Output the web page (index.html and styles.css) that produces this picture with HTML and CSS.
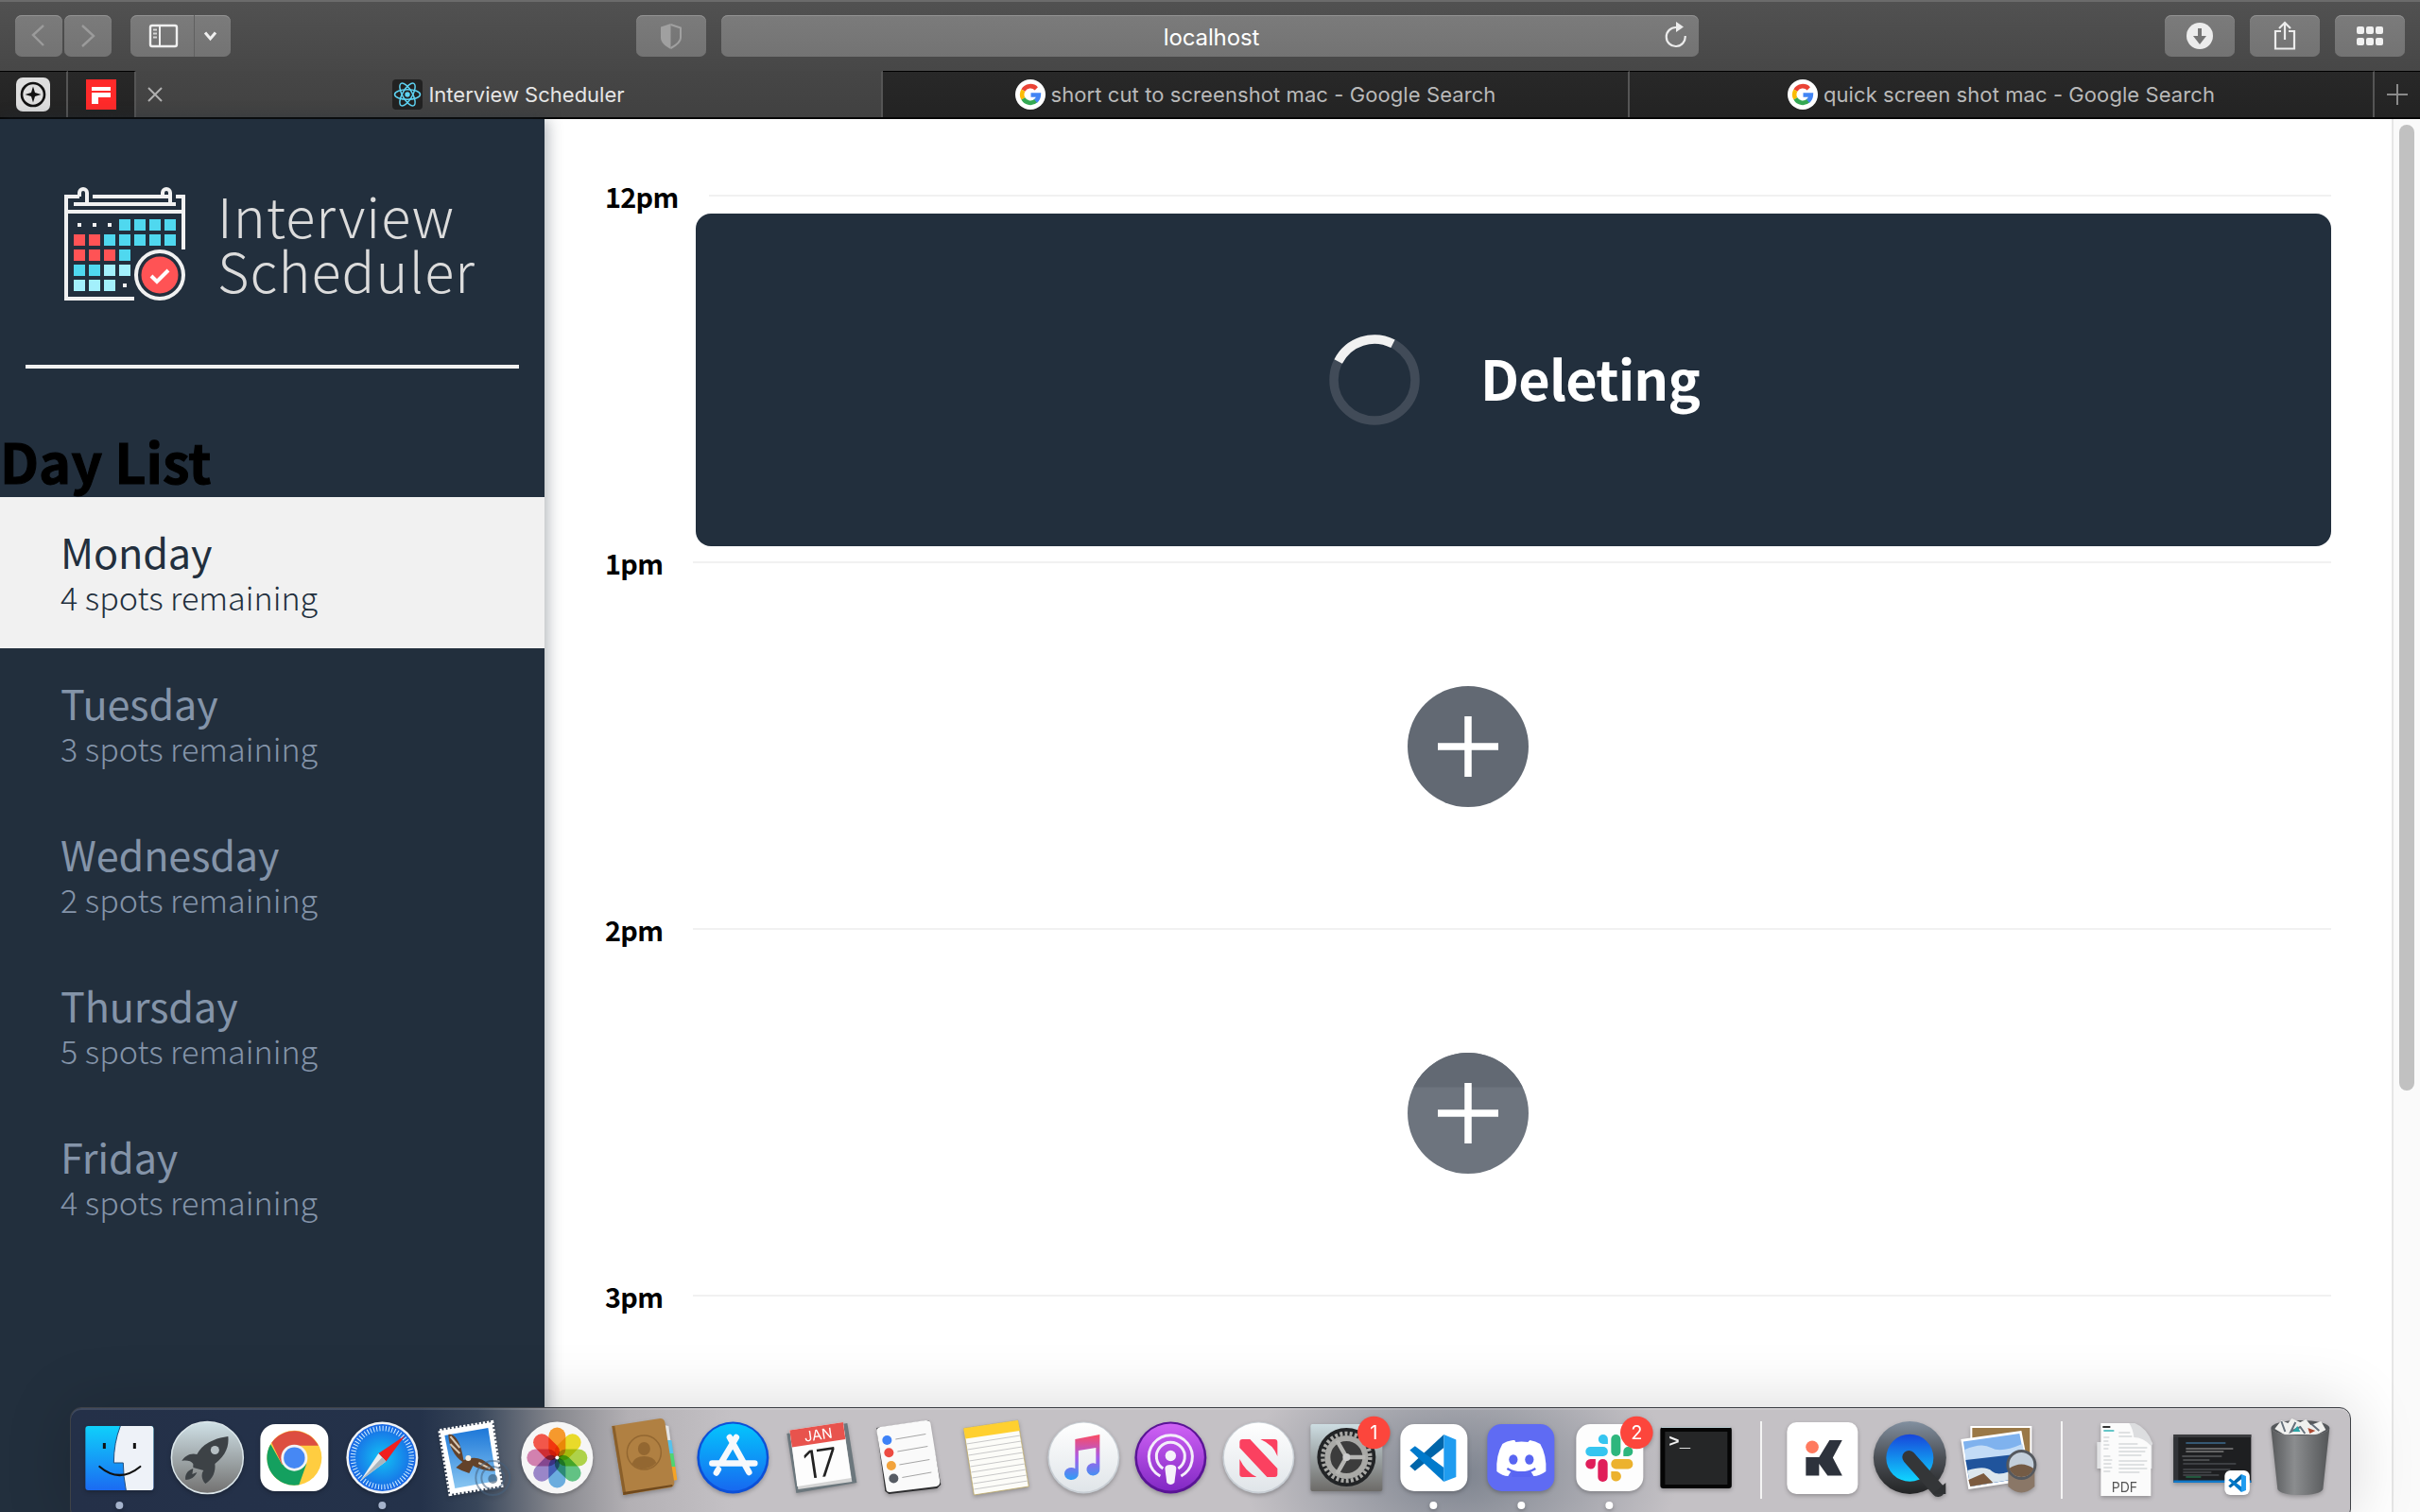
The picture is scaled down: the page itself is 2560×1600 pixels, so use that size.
FILE: index.html
```html
<!DOCTYPE html>
<html lang="en">
<head>
<meta charset="utf-8">
<title>Interview Scheduler</title>
<link rel="stylesheet" href="styles.css">
</head>
<body>
<div class="screen">
  <header class="toolbar">
    <div class="nav-pair">
      <span class="tool tool-nav"><svg width="50" height="44"><path d="M31 12 20 22 31 33" transform="translate(-1 -1)" fill="none" stroke="#9b9b9b" stroke-width="2.4"/></svg></span>
      <span class="tool tool-nav"><svg width="50" height="44"><path d="M19 11 31 22 19 33" fill="none" stroke="#9b9b9b" stroke-width="2.4"/></svg></span>
    </div>
    <div class="tool tool-sidebar">
      <svg class="side-main" width="68" height="44"><rect x="21" y="11" width="28" height="22" rx="2" fill="none" stroke="#f0f0f0" stroke-width="2.4"/><path d="M31 11v22" stroke="#f0f0f0" stroke-width="2"/><path d="M24 15.500h4M24 19.500h4M24 23.500h4" stroke="#d5d5d5" stroke-width="2"/></svg>
      <svg width="37" height="44"><path d="M11 18.500 16.500 25 22 18.500" fill="none" stroke="#f0f0f0" stroke-width="3"/></svg>
    </div>
    <div class="tool tool-shield"><svg width="74" height="44"><path d="M36.500 9 26 12.500V24c0 5 5 9 10.500 12z" fill="#a0a0a0"/><path d="M36.500 10 47 13.500V24c0 4-5 8-10.500 11" fill="none" stroke="#a0a0a0" stroke-width="2"/></svg></div>
    <div class="tool address"><span>localhost</span><svg class="reload" width="30" height="34" viewBox="0 0 30 34"><path d="M16 9a10 10 0 1 0 9.700 9" fill="none" stroke="#ececec" stroke-width="2.200"/><path d="M16 3v11l8-5.500z" fill="#ececec"/></svg></div>
    <div class="tool-group">
      <span class="tool tool-action"><svg width="74" height="44"><circle cx="37" cy="22" r="14" fill="#ececec"/><path d="M37 14v9" stroke="#757575" stroke-width="4"/><path d="M30 22h14l-7 9z" fill="#757575"/></svg></span>
      <span class="tool tool-action"><svg width="74" height="44"><path d="M33 17h-6v18.500h20V17h-6M37 26V8M31 14l6-6 6 6" fill="none" stroke="#ececec" stroke-width="2.200"/></svg></span>
      <span class="tool tool-action"><svg width="74" height="44" fill="#f0f0f0"><rect x="23" y="12" width="8" height="8" rx="2"/><rect x="33" y="12" width="8" height="8" rx="2"/><rect x="43" y="12" width="8" height="8" rx="2"/><rect x="23" y="24" width="8" height="8" rx="2"/><rect x="33" y="24" width="8" height="8" rx="2"/><rect x="43" y="24" width="8" height="8" rx="2"/></svg></span>
    </div>
  </header>

  <nav class="tabs">
    <div class="tab tab-pin"><svg width="36" height="36"><rect width="36" height="36" rx="7" fill="#dedede"/><circle cx="18" cy="18" r="12" fill="none" stroke="#111" stroke-width="2.600"/><path d="M18 9.500 20 16 26.500 18 20 20 18 26.500 16 20 9.500 18 16 16z" fill="#111"/></svg></div>
    <div class="tab tab-pin"><svg width="32" height="32"><path d="M0 0h32v32H0z" fill="#ff2a2a"/><path d="M6 8h20v4H6zM6 14h20v5H13v7H6z" fill="#fff"/></svg></div>
    <div class="tab tab-active">
      <svg class="close" width="18" height="18"><path d="M2 2 16 16M16 2 2 16" stroke="#b0b0b0" stroke-width="2"/></svg>
      <svg width="32" height="32" viewBox="-16 -16 32 32"><rect x="-16" y="-16" width="32" height="32" rx="4" fill="#222"/><g fill="none" stroke="#5ed3f3" stroke-width="1.500"><ellipse rx="13.500" ry="5.200"/><ellipse rx="13.500" ry="5.200" transform="rotate(60)"/><ellipse rx="13.500" ry="5.200" transform="rotate(120)"/></g><circle r="2.700" fill="#5ed3f3"/></svg>
      <span>Interview Scheduler</span>
    </div>
    <div class="tab tab-search"><svg class="g" width="32" height="32"><use href="#google"/></svg><span>short cut to screenshot mac - Google Search</span></div>
    <div class="tab tab-search tab-last"><svg class="g" width="32" height="32"><use href="#google"/></svg><span>quick screen shot mac - Google Search</span></div>
    <div class="tab tab-new"><svg width="24" height="24"><path d="M12 1v22M1 12h22" stroke="#8a8a8a" stroke-width="2"/></svg></div>
  </nav>

  <div class="page">
    <aside class="sidebar">
      <svg class="logo" width="576" height="260" viewBox="0 126 576 260">
        <g fill="none" stroke="#f1f1f1" stroke-width="4">
          <path d="M84 208H70V316H142M186 208H194V264M68 224H196M98 208H182M78 216H186"/>
          <path d="M84 208v-4a4 4 0 0 1 8 0V216M172 208v-4a4 4 0 0 1 8 0V216"/>
          <circle cx="169" cy="291" r="25"/>
        </g>
        <g fill="#4fd8ef"><path d="M126 232h12v12h-12zM142 232h12v12h-12zM158 232h12v12h-12zM174 232h12v12h-12zM110 248h12v12h-12zM126 248h12v12h-12zM142 248h12v12h-12zM158 248h12v12h-12zM174 248h12v12h-12zM126 264h12v12h-12zM78 280h12v12H78zM94 280h12v12H94z"/></g>
        <path fill="#ff5355" d="M78 248h12v12H78zM94 248h12v12H94zM78 264h12v12H78zM94 264h12v12H94zM110 264h12v12h-12z"/>
        <path fill="#a3f0fc" d="M110 280h12v12h-12zM126 280h12v12h-12zM78 296h12v12H78zM94 296h12v12H94zM110 296h12v12h-12z"/>
        <path fill="#f1f1f1" d="M82 236h4v4h-4zM98 236h4v4h-4zM114 236h4v4h-4zM130 300h4v4h-4z"/>
        <circle cx="169" cy="291" r="19.500" fill="#ff5355"/>
        <path d="M160 292l6 6 12-12" fill="none" stroke="#fff" stroke-width="4"/>
        <text class="logo-text" x="230" y="252" textLength="250">Interview</text>
        <text class="logo-text" x="230" y="310" textLength="272">Scheduler</text>
      </svg>
      <hr class="rule">
      <h1 class="day-title">Day List</h1>
      <ul class="days">
        <li class="day day-on"><span class="day-name">Monday</span><span class="day-spots">4 spots remaining</span></li>
        <li class="day"><span class="day-name">Tuesday</span><span class="day-spots">3 spots remaining</span></li>
        <li class="day"><span class="day-name">Wednesday</span><span class="day-spots">2 spots remaining</span></li>
        <li class="day"><span class="day-name">Thursday</span><span class="day-spots">5 spots remaining</span></li>
        <li class="day"><span class="day-name">Friday</span><span class="day-spots">4 spots remaining</span></li>
      </ul>
    </aside>

    <main class="schedule">
      <section class="slot">
        <div class="hour"><h2>12pm</h2><i></i></div>
        <div class="status">
          <svg width="100" height="100" viewBox="-50 -50 100 100"><circle r="43" fill="none" stroke="#414b58" stroke-width="9.500"/><path d="M-38.300-19.500A43 43 0 0 1 19.500-38.300" fill="none" stroke="#f1f1f1" stroke-width="9.500"/></svg>
          <span>Deleting</span>
        </div>
      </section>
      <section class="slot">
        <div class="hour"><h2>1pm</h2><i></i></div>
        <div class="add"><svg width="128" height="128"><circle cx="64" cy="64" r="64" fill="#626973"/><path d="M64 32v64M32 64h64" stroke="#fff" stroke-width="7.500"/></svg></div>
      </section>
      <section class="slot">
        <div class="hour"><h2>2pm</h2><i></i></div>
        <div class="add"><svg width="128" height="128"><circle cx="64" cy="64" r="64" fill="#6d747e"/><path d="M6.200 36.500A64 64 0 0 1 121.800 36.500z" fill="#626973"/><path d="M64 32v64M32 64h64" stroke="#fff" stroke-width="7.500"/></svg></div>
      </section>
      <section class="slot">
        <div class="hour"><h2>3pm</h2><i></i></div>
      </section>
    </main>
    <div class="scrollbar"><div class="thumb"></div></div>
  </div>

  <div class="dock">
    <!-- Finder -->
    <svg class="app" viewBox="-46.350 -52 92.700 111"><rect x="-36" y="-33" width="72" height="68" rx="3" fill="url(#finder)"/><path d="M1-33H33a3 3 0 0 1 3 3V32a3 3 0 0 1-3 3H7Q4 20 4 6H-6Q-6-15 1-33z" fill="#eef2f8"/><path d="M1-33Q-6-15-6 6H4Q4 20 7 35" fill="none" stroke="#24507e" stroke-width="1"/><path d="M-16-15v6M16-15v6" stroke="#111" stroke-width="3"/><path d="M-21 10Q0 28 22 10" fill="none" stroke="#111" stroke-width="2.200" stroke-linecap="round"/><circle class="dim" cy="51" r="4"/></svg>
    <!-- Launchpad -->
    <svg class="app" viewBox="-46.350 -52 92.700 111"><circle cy=".5" r="38" fill="url(#launch)" stroke="#dbe6ea" stroke-width="1.500"/><path d="M22-22C6-20-6-13-11-3-18-5-24-1-27 4-22 3-17 4-15 7L-15 11-4 14C-7 18-6 24-2 28 6 23 9 15 8 7 20-2 23-12 22-22zM-15 12c-7 2-9 8-8 12 5 0 10-3 12-8l-5 2z" fill="#3d4246"/><circle cx="8" cy="-7.500" r="4.500" fill="#b6bfc3"/></svg>
    <!-- Chrome -->
    <svg class="app" viewBox="-46.350 -52 92.700 111"><rect x="-36" y="-35" width="72" height="71" rx="16" fill="#fff"/><g transform="translate(0 .7)"><circle r="29" fill="#ffcd40"/><path d="M-25.100-14.500A29 29 0 0 0 5 28.600L13 6 0 0-13 7z" fill="#14a05f"/><path d="M-24-16A29 29 0 0 1 25.500-13H0L-13 7z" fill="#dd4e40"/><circle r="14" fill="#f3f3f3"/><circle r="11.200" fill="#4688f4"/></g></svg>
    <!-- Safari -->
    <svg class="app" viewBox="-46.350 -52 92.700 111"><circle cy=".5" r="38" fill="#f1f3f5"/><circle cy=".5" r="35.500" fill="url(#safari)"/><circle cy=".5" r="31" fill="none" stroke="#d9f1ff" stroke-width="5.500" stroke-dasharray="1 2.247"/><path d="M24-22.700-4-4 4 4.500z" fill="#f01f1f"/><path d="M-23 24.700-4-4 4 4.500z" fill="#e9edf0"/><path d="M-23 24.700 0 0 4 4.500z" fill="#a9b5bd"/><circle class="dim" cy="51" r="4"/></svg>
    <!-- Mail -->
    <svg class="app" viewBox="-47.350 -52 92.700 111"><path d="M-33-28 22-37 32 30-22 39z" fill="#fff" stroke="#fff" stroke-width="4" stroke-dasharray="2.400 1.800"/><path d="M-28-23 18-31 27 25-17 33z" fill="url(#mail)"/><path d="M-24-24C-16-26-10-12-8 3L-4 2C8-2 16 4 26 14 18 16 8 12 2 9L-2 17-10 14-16 11-9 5C-17 0-24-12-24-24z" fill="#63422a"/><path d="M-22-22-12-10M-22-14-12-4M8 6 20 12" stroke="#d5c6b1" stroke-width="2"/><circle cx="-3" cy="1" r="3" fill="#f4eee2"/><g fill="none" stroke="#46617d" stroke-opacity=".55" stroke-width="2"><circle cx="23" cy="22" r="18"/><circle cx="23" cy="22" r="12"/></g><circle cx="23" cy="23" r="5" fill="#36536f" fill-opacity=".6"/></svg>
    <!-- Photos -->
    <svg class="app" viewBox="-46.350 -52 92.700 111"><circle cy=".5" r="38" fill="#f6f6f6"/><g class="petals" transform="translate(0 .5)"><rect x="-9" y="-32" width="18" height="32" rx="9" fill="#ff9f2e"/><rect x="-9" y="-32" width="18" height="32" rx="9" fill="#f2e22b" transform="rotate(45)"/><rect x="-9" y="-32" width="18" height="32" rx="9" fill="#b5da4c" transform="rotate(90)"/><rect x="-9" y="-32" width="18" height="32" rx="9" fill="#65c989" transform="rotate(135)"/><rect x="-9" y="-32" width="18" height="32" rx="9" fill="#6fb4e6" transform="rotate(180)"/><rect x="-9" y="-32" width="18" height="32" rx="9" fill="#a08bd0" transform="rotate(225)"/><rect x="-9" y="-32" width="18" height="32" rx="9" fill="#da86b6" transform="rotate(270)"/><rect x="-9" y="-32" width="18" height="32" rx="9" fill="#fb5a4c" transform="rotate(315)"/></g><circle cy=".5" r="2" fill="#fff"/></svg>
    <!-- Contacts -->
    <svg class="app" viewBox="-46.350 -52 92.700 111"><path d="M20-34l5 1 2 15H22z" fill="#e4e4e4"/><path d="M23-18h5l2 14h-5z" fill="#56c2ec"/><path d="M25-4h5l2 14h-5z" fill="#4ed572"/><path d="M27 10h5l2 14-5 1z" fill="#f5a325"/><path d="M-35-33 16-41q4 0 5 4L31 27q0 4-4 5L-23 40z" fill="#b08042"/><path d="M-35-33-23 40-20 39-32-33z" fill="#8a5f2a"/><path d="M-23 40 29 31v-2L-23 37z" fill="#70491d"/><g transform="translate(-1 -5)"><circle r="18" fill="none" stroke="#936731" stroke-width="1.500"/><ellipse cy="-4" rx="6.500" ry="7" fill="#936731"/><path d="M-13 12Q-10 4 0 4T13 11Q0 23-13 12z" fill="#936731"/></g></svg>
    <!-- App Store -->
    <svg class="app" viewBox="-46.350 -52 92.700 111"><circle cy=".5" r="38" fill="#0c50d8"/><circle cy="0" r="35.500" fill="url(#store)"/><g stroke="#f6f9fc" stroke-width="6.500" stroke-linecap="round"><path d="M3.500-21-12 5M-22 6.500H23M-3.500-21 17 16M-15.500 13-17.500 16.500"/></g></svg>
    <!-- Calendar -->
    <svg class="app" viewBox="-46.350 -52 92.700 111"><path d="M-36-25 28-36 38 27-26 38z" fill="#6c777d"/><path d="M-33-28.500 23.500-37 33 26-24 34z" fill="#d5d5d5"/><path d="M-33-28.500 23.500-37 32 22-25 31z" fill="#fdfdfd"/><path d="M-33-28.500 23.500-37 26-19-30.500-10.500z" fill="#e8534d"/><text class="cal-month" transform="translate(-2 -18.500) rotate(-8.500)">JAN</text><text class="cal-day" transform="translate(1 21) rotate(-8.500)">17</text></svg>
    <!-- Reminders -->
    <svg class="app" viewBox="-46.350 -52 92.700 111"><path d="M-33-31 22-39 35 29 31 33-20 39-24 36z" fill="#2c2c2e"/><path d="M-33-28q0-3 4-4L19-39q4 0 5 3L34 26q0 4-4 5L-19 37q-4 0-4-4z" fill="#fafafa"/><path d="M-13-19 19-24.500M-11-6 21-11.500M-9 8 23 2.500M-6 21.500 25 16" stroke="#a5a5a5"/><circle cx="-22" cy="-18" r="5" fill="#3e82f7"/><circle cx="-20" cy="-4.700" r="5" fill="#ed4b42"/><circle cx="-17.500" cy="9" r="5" fill="#f2a33c"/><circle cx="-15" cy="22.500" r="5" fill="#565b63"/></svg>
    <!-- Notes -->
    <svg class="app" viewBox="-46.350 -52 92.700 111"><path d="M-34-30.500 23.500-39 35 31-23 40z" fill="#fcfcf8" stroke="#bda864" stroke-width=".8"/><path d="M-34-30.500 23.500-39 25.500-28-32-19.500z" fill="#ffd02f"/><path d="M-31-14 26-23M-30-8 27-17M-29-2 28-11M-28 4 29-5M-27 10 30 1M-26 16 31 7M-25 22 32 13M-24 28 33 19M-23 34 34 25" stroke="#c8c8c8"/></svg>
    <!-- Music -->
    <svg class="app" viewBox="-46.350 -52 92.700 111"><circle cy=".5" r="38" fill="#c8ced4"/><circle r="36.500" fill="url(#disc)"/><path d="M-9-19 17-24V12a7 6.500 0 1 1-4-5V-10L-5.500-7V17a7.500 6.500 0 1 1-3.500-5z" fill="url(#music)"/></svg>
    <!-- Podcasts -->
    <svg class="app" viewBox="-46.350 -52 92.700 111"><circle cy=".5" r="38" fill="#5a1496"/><circle r="35.500" fill="url(#pod)"/><g fill="none" stroke="#f4eefa" stroke-width="3"><path d="M-11 20A23 23 0 1 1 11 20"/><path d="M-8 12A15 15 0 1 1 8 12"/></g><circle cy="-1.500" r="5.700" fill="#f6f2fa"/><path d="M-6 12q0-4 6-4t6 4L4 27q-4 4-8 0z" fill="#f6f2fa"/></svg>
    <!-- News -->
    <svg class="app" viewBox="-46.350 -52 92.700 111"><circle cy=".5" r="38" fill="#c8ced4"/><circle r="36.500" fill="url(#disc)"/><path d="M-20-16q0-3 3-3H-9L20 12v6q0 3-3 3H9L-20-10zM2-19H17q3 0 3 3V-1Q16-13 2-19zM-20 2Q-14 15-2 21H-17q-3 0-3-3z" fill="#fb4160"/></svg>
    <!-- System Preferences -->
    <svg class="app" viewBox="-46.350 -52 92.700 111"><rect x="-38" y="-35" width="76" height="71" rx="2" fill="url(#prefs)"/><circle r="31" fill="#222426"/><circle r="25" fill="none" stroke="#a9a9a6" stroke-width="4.500" stroke-dasharray="3 2.236"/><circle r="20" fill="#3c3c3c" stroke="#a9a9a6" stroke-width="6"/><path d="M0 0H20M0 0-10-17.500M0 0-10 17.500" stroke="#b5b5b2" stroke-width="4.500"/><circle r="4" fill="#ccc"/><circle cx="29" cy="-26" r="17.300" fill="#fc463c"/><text class="badge-num" x="29" y="-19">1</text></svg>
    <!-- Visual Studio Code -->
    <svg class="app" viewBox="-46.350 -52 92.700 111"><rect x="-35" y="-35" width="71" height="71" rx="15" fill="#fff"/><use href="#code"/><circle class="lit" cy="51" r="4"/></svg>
    <!-- Discord -->
    <svg class="app" viewBox="-46.350 -52 92.700 111"><rect x="-36" y="-35" width="71" height="71" rx="15" fill="#5f6bf3"/><path d="M-7-18-9-18Q-16-17-20-14-27-2-26 15-20 20-14 20L-11 15H10L13 20Q19 20 26 15 27-2 20-14 15-17 9-18L7-16Q0-17-6-16z" fill="#fff"/><path d="M-15 12Q0 21 15 12" fill="none" stroke="#5865f2" stroke-width="2.500"/><path d="M-10 16.500Q0 20 10 16.500V21H-10z" fill="#5865f2"/><ellipse cx="-8.500" cy="2.500" rx="4.600" ry="5.200" fill="#5865f2"/><ellipse cx="8.500" cy="2.500" rx="4.600" ry="5.200" fill="#5865f2"/><circle class="lit" cy="51" r="4"/></svg>
    <!-- Slack -->
    <svg class="app" viewBox="-46.350 -52 92.700 111"><rect x="-35" y="-35" width="71" height="71" rx="15" fill="#fdfdfd"/><g fill="#36c5f0"><rect x="-25" y="-11" width="23.500" height="10" rx="5"/><path d="M-1.500-14h-5a5 5 0 1 1 5-5z"/></g><g fill="#2eb67d"><rect x="2" y="-24" width="10" height="23" rx="5"/><path d="M15-1v-5a5 5 0 1 1 5 5z"/></g><g fill="#ecb22e"><rect x="2" y="2" width="23" height="10.500" rx="5"/><path d="M2 15h5a5.300 5.300 0 1 1-5 5.500z"/></g><g fill="#e01e5a"><rect x="-12" y="2" width="10.300" height="24" rx="5"/><path d="M-14.500 2v5a5.300 5.300 0 1 1-5.200-5z"/></g><circle cx="29" cy="-26" r="17.300" fill="#fc463c"/><text class="badge-num" x="29" y="-19">2</text><circle class="lit" cy="51" r="4"/></svg>
    <!-- Terminal -->
    <svg class="app" viewBox="-46.350 -52 92.700 111"><rect x="-38" y="-32" width="75.500" height="65" rx="3" fill="#050505"/><path d="M-37-31.500H36.500" stroke="#b9ccd2"/><rect x="-33" y="-27" width="66" height="56" fill="#252627"/><text class="prompt" x="-29" y="-11">&gt;_</text></svg>
    <i class="dock-rule dock-rule-a"></i>
    <!-- Kite -->
    <svg class="app" viewBox="-46.350 -52 92.700 111"><rect x="-37" y="-37" width="75" height="76" rx="10" fill="#fff"/><circle cx="-10.300" cy="-10.700" r="6.800" fill="#ff7a5f"/><path d="M-17 0H-3L8-18H21.400L11.500.5 21.500 19.500H6L-3 7V19.500H-17z" fill="#2d323c"/></svg>
    <!-- QuickTime -->
    <svg class="app" viewBox="-46.350 -52 92.700 111"><circle cy=".5" r="38.500" fill="url(#qt)"/><circle cy=".7" r="25" fill="url(#qtin)"/><path d="M-1 0 30 35" stroke="#343638" stroke-width="14" stroke-linecap="round"/><path d="M24 39H38V27z" fill="#303234"/></svg>
    <!-- Preview -->
    <svg class="app" viewBox="-46.350 -52 92.700 111"><path d="M-28-33H37V14H-28z" fill="#fff"/><path d="M-26-31H35V12H-26z" fill="#9a7846"/><path d="M-38-19 26-28 36 24-30 34z" fill="#fff"/><path d="M-35.500-16.500 24-25 33 21-28 31z" fill="#7fb2ee"/><path d="M-34-8Q-16-16-6-10T27-14L30-1-33 5z" fill="#c3dcf6"/><path d="M-33 3 28-4 33 21-28 31z" fill="#20549c"/><path d="M-31 14Q-12 8-5 15T28 9L32 21-28 31z" fill="#dce7ee"/><path d="M-30 24-14 17-4 27-28 31z" fill="#7c5b3f"/><path d="M12 14V31q14 13 28 0V12z" fill="#8a7767"/><circle cx="26" cy="8" r="14.500" fill="#c3cfdb" stroke="#55595f" stroke-width="3"/><path d="M13 12Q26 3 39 12 35 21 26 21T13 12z" fill="#745b45"/></svg>
    <i class="dock-rule dock-rule-b"></i>
    <!-- PDF stack -->
    <svg class="app" viewBox="-46.350 -52 92.700 111"><path d="M-29-16H29V12H-29z" fill="#e2e3e5"/><path d="M-25-36H8L28-15V41H-25z" fill="#fbfbfb"/><path d="M5-36Q9-30 10-21 20-21 28-12L30-14Q24-31 11-36z" fill="#dcdddf"/><path d="M-23-32h8" stroke="#333" stroke-width="2"/><path d="M-22-28h11" stroke="#65c6c8" stroke-width="2"/><path d="M-22-21h6M-22-17h5M-22-13h6M-22-9h5M-22-1h7M-22 3h9M-22 7h8M-22 11h9M-22 15h7M-6-26h12M-6-22h14M-6-14h20M-6-10h30M-6-6h28M-6-2h24M-6 4h30M-6 8h27M-6 12h30M-6 16h22" stroke="#c3c7ca"/><text class="pdf" y="37">PDF</text></svg>
    <!-- Minimised editor window -->
    <svg class="app" viewBox="-46.350 -52 92.700 111"><path d="M-41-24H41V27H-41z" fill="#1e1f21"/><path d="M-41-24H41v3H-41z" fill="#3a3b3e"/><path d="M-41-21h5V25h-5z" fill="#303236"/><path d="M-41 24.500H41V27H-41z" fill="#1179c9"/><path d="M-28-15H14" stroke="#4c93c6"/><path d="M-28-9H22M-28-6H12" stroke="#aaa"/><path d="M-32-1h42M-31 3h28" stroke="#75787b"/><path d="M-31 7H25M-31 13h50M-31 16h30M-31 19h38" stroke="#5c6064"/><path d="M-28 21h16" stroke="#25945b"/><rect x="13" y="14" width="26.500" height="26" rx="6" fill="#fff"/><use href="#code" transform="translate(26.500 27) scale(.38)"/></svg>
    <!-- Trash -->
    <svg class="app" viewBox="-46.350 -52 92.700 111"><ellipse cy="-31" rx="31" ry="8" fill="#55585b"/><path d="M-27-30-20-39-13-36-9-41 0-37 6-40 11-34 22-38 27-29 18-24H-17z" fill="#f0f0ee"/><path d="M-20-38-16-27M-5-37-10-27 0-32 5-25M12-35 20-28" fill="none" stroke="#66717c" stroke-width="2"/><path d="M-8-27-3-33 0-27z" fill="#29a6a8"/><path d="M8-31l8 3-6 3z" fill="#ad4a31"/><path d="M-31-31Q-28-23 0-23T31-31L24 34Q20 40 0 40T-24 34z" fill="url(#bin)"/></svg>
  </div>

  <svg class="defs" width="0" height="0">
    <defs>
      <g id="google"><circle cx="16" cy="16" r="16" fill="#fff"/><g fill="none" stroke-width="4.600"><path d="M8.400 11.600A8.800 8.800 0 0 1 22.300 9.800" stroke="#ea4335"/><path d="M8.400 20.400A8.800 8.800 0 0 1 8.400 11.600" stroke="#fbbc05"/><path d="M22 22.500A8.800 8.800 0 0 1 8.400 20.400" stroke="#34a853"/><path d="M16.500 16.500H24.800A8.800 8.800 0 0 1 21.500 22.900" stroke="#4285f4"/></g></g>
      <g id="code"><path d="M-25 9.500-19.500 14.500 11-10V-24z" fill="#0065a9"/><path d="M-25-7.500-19.500-11.700 11 11V26z" fill="#007acc"/><path d="M11-24 24-18.500V21L11 26z" fill="#1f9cf0"/></g>
      <linearGradient id="finder" x2="0" y2="1"><stop stop-color="#0fd0fb"/><stop offset="1" stop-color="#1b6bf2"/></linearGradient>
      <linearGradient id="launch" x2="0" y2="1"><stop stop-color="#d0e1e7"/><stop offset="1" stop-color="#727170"/></linearGradient>
      <radialGradient id="safari"><stop stop-color="#12c3f5"/><stop offset="1" stop-color="#1966e4"/></radialGradient>
      <linearGradient id="mail" x2="0" y2="1"><stop stop-color="#1c77d8"/><stop offset="1" stop-color="#89c6f1"/></linearGradient>
      <linearGradient id="store" x2="0" y2="1"><stop stop-color="#04c5fd"/><stop offset="1" stop-color="#1769f0"/></linearGradient>
      <linearGradient id="disc" x2="0" y2="1"><stop stop-color="#fff"/><stop offset="1" stop-color="#e0e5e9"/></linearGradient>
      <linearGradient id="music" x2="0" y2="1"><stop stop-color="#fb4b62"/><stop offset=".5" stop-color="#a85be8"/><stop offset="1" stop-color="#2f9df5"/></linearGradient>
      <linearGradient id="pod" x2="0" y2="1"><stop stop-color="#cf62f5"/><stop offset="1" stop-color="#8229c4"/></linearGradient>
      <linearGradient id="prefs" x2="0" y2="1"><stop stop-color="#cddde2"/><stop offset="1" stop-color="#6c6a67"/></linearGradient>
      <linearGradient id="qt" x2="0" y2="1"><stop stop-color="#8290a0"/><stop offset=".5" stop-color="#4c5056"/><stop offset="1" stop-color="#232425"/></linearGradient>
      <linearGradient id="qtin" x2="0" y2="1"><stop stop-color="#1745da"/><stop offset="1" stop-color="#0fd6ff"/></linearGradient>
      <linearGradient id="bin"><stop stop-color="#57595b"/><stop offset=".4" stop-color="#8b8d8f"/><stop offset="1" stop-color="#535557"/></linearGradient>
    </defs>
  </svg>
</div>
</body>
</html>
```
FILE: styles.css
```css
* { box-sizing: border-box; }
body { margin: 0; }
svg { display: block; flex: none; }

.screen {
  position: relative;
  display: flex;
  flex-direction: column;
  width: 2560px;
  height: 1600px;
  overflow: hidden;
  background: #fff;
  font-family: "Noto Sans CJK JP", "Noto Sans", sans-serif;
}

/* Browser toolbar */
.toolbar {
  display: flex;
  flex: none;
  height: 75px;
  padding: 14px 16px 0;
  border-top: 2px solid #6b6b6b;
  background: linear-gradient(#515151, #474747);
}
.tool {
  display: flex;
  height: 44px;
  border-radius: 7px;
  background: linear-gradient(#7b7b7b, #737373);
  box-shadow: inset 0 1px #939393;
}
.nav-pair { display: flex; gap: 2px; }
.tool-nav { width: 50px; }
.tool-sidebar { width: 106px; margin-left: 20px; }
.side-main { border-right: 1px solid #606060; }
.tool-shield { width: 74px; margin-left: 429px; }
.address {
  align-items: center;
  justify-content: center;
  position: relative;
  width: 1034px;
  margin-left: 16px;
  color: #fff;
  font: 24px/44px Inter, sans-serif;
  letter-spacing: -0.1px;
}
.address span { padding-top: 3px; padding-left: 3px; }
.reload { position: absolute; right: 10px; top: 4px; }
.tool-group { display: flex; gap: 16px; margin-left: auto; }
.tool-action { width: 74px; }

/* Tab strip */
.tabs {
  display: flex;
  flex: none;
  height: 51px;
  border-bottom: 2px solid #050505;
}
.tab {
  display: flex;
  align-items: center;
  justify-content: center;
  gap: 6px;
  border-top: 1px solid #000;
  border-right: 2px solid #555;
  background: linear-gradient(#282828, #232323);
  color: #b9b9b9;
  font: 22px/48px Inter, sans-serif;
  letter-spacing: 0.08px;
  white-space: nowrap;
}
.tab-pin { width: 72px; }
.tab-active {
  position: relative;
  width: 790px;
  border-top-color: #464646;
  background: linear-gradient(#464646, #414141);
  color: #e6e6e6;
  letter-spacing: 0;
}
.close { position: absolute; left: 11px; top: 15px; }
.tab-search { width: 790px; }
.tab-last { width: 788px; }
.tab-new { flex: 1; border-right: 0; }

/* Page */
.page { display: flex; flex: 1; min-height: 0; }
.sidebar {
  position: relative;
  width: 576px;
  background: #222f3d;
  box-shadow: 2px 0 16px rgba(34, 47, 61, .4);
}
.logo-text { font-size: 57.6px; font-weight: 300; fill: #dcdcdc; }
.rule { height: 4px; margin: 0 27px; border: 0; background: #f1f1f1; }
.day-title {
  height: 136px;
  margin: 0;
  padding-top: 57px;
  color: #000;
  font-size: 57.6px;
  font-weight: 700;
  line-height: 80px;
  -webkit-text-stroke: 1px #000;
}
.days { margin: 0; padding: 0; list-style: none; }
.day {
  display: flex;
  flex-direction: column;
  justify-content: center;
  height: 160px;
  padding-left: 64px;
  color: #8494a9;
}
.day-on { background: #f1f1f1; color: #222f3d; }
.day-name { font-size: 43.2px; font-weight: 400; line-height: 48px; letter-spacing: -0.15px; }
.day-spots { font-size: 34.1px; font-weight: 300; line-height: 46px; transform: translateY(1px); }

.schedule { flex: 1; padding: 64px 64px 0; }
.slot { height: 388px; }
.hour { display: flex; align-items: center; gap: 32px; height: 36px; }
.hour h2 { margin: 0; font-size: 28.8px; font-weight: 700; line-height: 36px; letter-spacing: -0.7px; }
.hour i { flex: 1; height: 2px; background: #f1f1f1; transform: translateY(-1px); }
.status {
  display: flex;
  align-items: center;
  justify-content: center;
  gap: 62px;
  height: 352px;
  margin-left: 96px;
  border-radius: 16px;
  background: #222f3d;
  color: #fff;
  font-size: 57.6px;
  font-weight: 700;
  letter-spacing: -0.8px;
}
.status span { padding-bottom: 6px; }
.add { display: flex; align-items: center; justify-content: center; height: 352px; }
.scrollbar {
  width: 30px;
  padding: 6px 6px;
  border-left: 2px solid #e6e6e6;
  background: #fafafa;
}
.thumb { width: 16px; height: 1022px; border-radius: 8px; background: #c1c1c1; }

/* Dock */
.dock {
  position: absolute;
  left: 74px;
  top: 1489px;
  display: flex;
  width: 2413px;
  height: 120px;
  padding-left: 5px;
  border: 1px solid #3f4247;
  border-radius: 12px;
  background:
    radial-gradient(ellipse 230px 140px at 1470px 70px, rgba(118, 125, 137, .9), rgba(118, 125, 137, 0)),
    linear-gradient(90deg, #243048 0, #24324a 370px, #38465a 430px, #88898f 515px, #b3b0b4 590px, #c4c1c5 700px, #c4c1c5);
  box-shadow: 0 0 70px rgba(0, 0, 0, .16), inset 0 2px rgba(255, 255, 255, .13);
}
.app { width: 92.7px; height: 111px; overflow: visible; filter: drop-shadow(0 2px 2px rgba(0, 0, 0, .25)); }
.dim { fill: #a5b3cc; }
.lit { fill: #fff; }
.petals rect { mix-blend-mode: multiply; }
.dock-rule { flex: none; width: 2px; height: 82px; margin-top: 14px; background: #f4f4f4; }
.dock-rule-a { margin-left: 21px; margin-right: 17px; }
.dock-rule-b { margin-left: 21px; margin-right: 19px; }
.cal-month { font: 15px Inter, sans-serif; fill: #fff; text-anchor: middle; }
.cal-day { font: 300 41px Inter, sans-serif; fill: #222; text-anchor: middle; letter-spacing: -2px; }
.badge-num { font: 20px Inter, sans-serif; fill: #fff; text-anchor: middle; }
.prompt { font: bold 19px "Liberation Mono", monospace; fill: #f2f2f2; }
.pdf { font: 14px Inter, sans-serif; fill: #555; text-anchor: middle; }
.defs { position: absolute; }
```
